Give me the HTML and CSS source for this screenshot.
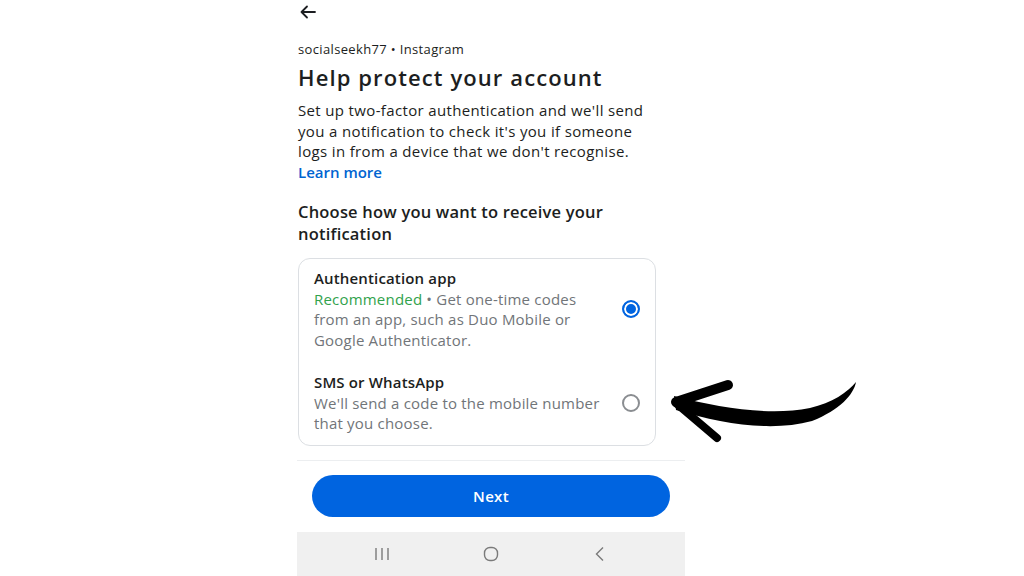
FILE: index.html
```html
<!DOCTYPE html>
<html>
<head>
    <meta charset="utf-8">
    <title>Help protect your account</title>
    <link rel="stylesheet" href="styles.css">
</head>
<body>
    <div class="phone">
        <div class="top">
            <svg class="back" width="18" height="14" viewBox="0 0 18 14">
                <path d="M16 7H2.5M8 1.5L2.5 7L8 12.5" fill="none" stroke="#1c1e21" stroke-width="1.8" stroke-linecap="round" stroke-linejoin="round"/>
            </svg>
        </div>
        <div class="content">
            <div class="context">socialseekh77 • Instagram</div>
            <h1>Help protect your account</h1>
            <p class="intro">Set up two-factor authentication and we'll send you a notification to check it's you if someone logs in from a device that we don't recognise. <a href="#">Learn more</a></p>
            <h2>Choose how you want to receive your notification</h2>
            <div class="options">
                <div class="option">
                    <div class="option-text">
                        <div class="option-title">Authentication app</div>
                        <div class="option-desc"><span class="rec">Recommended</span> • Get one-time codes from an app, such as Duo Mobile or Google Authenticator.</div>
                    </div>
                    <span class="radio checked"></span>
                </div>
                <div class="option">
                    <div class="option-text">
                        <div class="option-title">SMS or WhatsApp</div>
                        <div class="option-desc">We'll send a code to the mobile number that you choose.</div>
                    </div>
                    <span class="radio"></span>
                </div>
            </div>
        </div>
        <div class="footer">
            <button class="next">Next</button>
        </div>
        <div class="navbar">
            <svg width="18" height="16" viewBox="0 0 18 16">
                <path d="M3 2V14M9 2V14M15 2V14" stroke="#7a7a7a" stroke-width="1.4"/>
            </svg>
            <svg width="18" height="16" viewBox="0 0 18 16">
                <rect x="2.5" y="1.5" width="13" height="13" rx="5.5" fill="none" stroke="#7a7a7a" stroke-width="1.4"/>
            </svg>
            <svg width="18" height="16" viewBox="0 0 18 16">
                <path d="M12 1.5L5.5 8L12 14.5" fill="none" stroke="#7a7a7a" stroke-width="1.4"/>
            </svg>
        </div>
    </div>

    <svg class="pointer" width="210" height="80" viewBox="0 0 210 80">
        <path d="M14 26 C60 38 110 46 150 38 C172 33 188 22 196 12 C194 24 180 40 152 51 C112 62 62 54 16 40 Z" fill="#000"/>
        <path d="M16 32 L68 15" stroke="#000" stroke-width="10" stroke-linecap="round"/>
        <path d="M17 34 L57 68" stroke="#000" stroke-width="8" stroke-linecap="round"/>
    </svg>
</body>
</html>
```

FILE: styles.css
```css
body {
    margin: 0;
    background: #ffffff;
    font-family: "Open Sans", "Liberation Sans", Arial, sans-serif;
    color: #1c1e21;
}

.phone {
    width: 388px;
    margin-left: 297px;
    height: 576px;
    display: flex;
    flex-direction: column;
}

.top {
    height: 24px;
    padding-left: 2px;
    display: flex;
    align-items: center;
}

.content {
    padding-left: 1px;
    flex: 1;
}

.context {
    margin-top: 17px;
    font-size: 13px;
    line-height: 16px;
    letter-spacing: 0.35px;
}

h1 {
    margin: 6px 0 0;
    font-size: 22px;
    font-weight: 600;
    letter-spacing: 1.1px;
    line-height: 28px;
}

.intro {
    margin: 9px 0 0;
    font-size: 15px;
    line-height: 20.7px;
    letter-spacing: 0.35px;
    width: 352px;
}

.intro a {
    color: #0064d1;
    font-weight: 600;
    letter-spacing: 0;
    text-decoration: none;
}

h2 {
    margin: 18px 0 0;
    font-size: 16.5px;
    font-weight: 600;
    letter-spacing: 0.2px;
    line-height: 22px;
    width: 340px;
}

.options {
    margin-top: 13px;
    width: 356px;
    border: 1px solid #dcdfe3;
    border-radius: 12px;
    padding: 9px 0 11px;
}

.option {
    display: flex;
    align-items: center;
    padding: 0 15px 0 15px;
}

.option + .option {
    margin-top: 21px;
}

.option-text {
    flex: 1;
}

.option-title {
    font-size: 15px;
    font-weight: 600;
    letter-spacing: 0.15px;
    line-height: 20px;
    margin-bottom: 1px;
}

.option-desc {
    font-size: 15px;
    line-height: 20.6px;
    letter-spacing: 0.2px;
    color: #717579;
    width: 292px;
}

.rec {
    color: #31a24c;
}

.radio {
    width: 18px;
    height: 18px;
    border: 2px solid #8a8d91;
    border-radius: 50%;
    box-sizing: border-box;
}

.radio.checked {
    border-color: #0064e0;
    background: #0064e0;
    box-shadow: inset 0 0 0 2px #ffffff;
}

.footer {
    border-top: 1px solid #eceef0;
    padding: 14px 15px 15px;
}

.next {
    display: block;
    width: 358px;
    height: 42px;
    border: none;
    border-radius: 21px;
    background: #0064e0;
    color: #ffffff;
    font-family: inherit;
    font-size: 15px;
    font-weight: 600;
    letter-spacing: 0.3px;
}

.navbar {
    height: 44px;
    background: #f0f0f0;
    display: flex;
    justify-content: center;
    align-items: center;
    gap: 91px;
}

.pointer {
    position: absolute;
    left: 660px;
    top: 370px;
}
```
